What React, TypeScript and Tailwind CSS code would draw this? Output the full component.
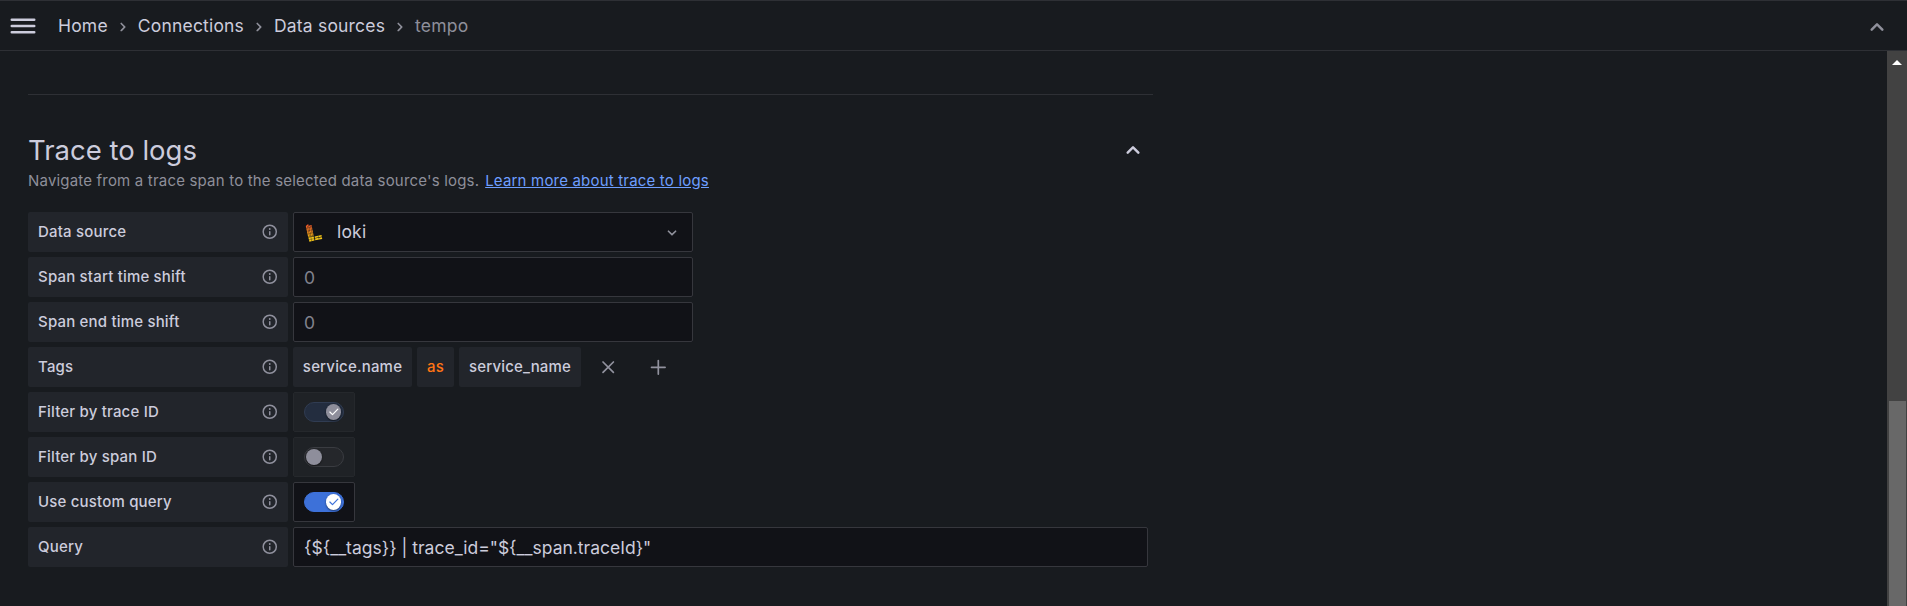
import type { ReactNode } from 'react';

const paths = {
  bars: 'M3,8H21a1,1,0,0,0,0-2H3A1,1,0,0,0,3,8Zm18,8H3a1,1,0,0,0,0,2H21a1,1,0,0,0,0-2Zm0-5H3a1,1,0,0,0,0,2H21a1,1,0,0,0,0-2Z',
  info: 'M12,2A10,10,0,1,0,22,12,10,10,0,0,0,12,2Zm0,18a8,8,0,1,1,8-8A8,8,0,0,1,12,20Zm0-9a1,1,0,0,0-1,1v4a1,1,0,0,0,2,0V12A1,1,0,0,0,12,11Zm0-4a1.25,1.25,0,1,0,1.25,1.25A1.25,1.25,0,0,0,12,7Z',
  right: 'M14.83,11.29,10.59,7.05a1,1,0,0,0-1.42,0,1,1,0,0,0,0,1.41L12.71,12,9.17,15.54a1,1,0,0,0,0,1.41,1,1,0,0,0,.71.29,1,1,0,0,0,.71-.29l4.24-4.24A1,1,0,0,0,14.83,11.29Z',
  down: 'M17,9.17a1,1,0,0,0-1.41,0L12,12.71,8.46,9.17a1,1,0,0,0-1.41,0,1,1,0,0,0,0,1.42l4.24,4.24a1,1,0,0,0,1.42,0L17,10.59A1,1,0,0,0,17,9.17Z',
  up: 'M17,13.41,12.71,9.17a1,1,0,0,0-1.42,0L7.05,13.41a1,1,0,0,0,0,1.42,1,1,0,0,0,1.41,0L12,11.29l3.54,3.54a1,1,0,0,0,.7.29,1,1,0,0,0,.71-.29A1,1,0,0,0,17,13.41Z',
};

function Icon({ name, className }: { name: keyof typeof paths; className: string }) {
  return (
    <svg viewBox="0 0 24 24" fill="currentColor" className={`shrink-0 ${className}`}>
      <path d={paths[name]} />
    </svg>
  );
}

function LokiLogo() {
  return (
    <svg viewBox="0 0 20 20" className="mt-[2px] size-5 shrink-0">
      <defs>
        <linearGradient id="loki" x1="0" y1="0" x2="0" y2="1">
          <stop offset="0" stopColor="#f0502a" />
          <stop offset="0.5" stopColor="#f58220" />
          <stop offset="1" stopColor="#f8b914" />
        </linearGradient>
      </defs>
      <path d="M1.8 3 4.2 1l2.6 12.7-2.6.5zM4.9 2.8l2.6-.9 2.2 11.2-2.6.5z" fill="url(#loki)" />
      <path d="M4.4 14.6l5.3-1 .8 4-5.1 1.2z" fill="#f5c518" />
      <path d="M10.6 13.4l6.9-1.3.3 1.5-6.9 1.3zM11 15.6l6.9-1.3.3 1.6-6.9 1.3z" fill="#f5c518" />
      <path d="M2.2 5.4l6-1.8M2.9 8.3l6-1.8M3.5 11.2l6-1.8M4 13.8l6-1.6M6.9 14l.9 4.6M4.6 16.8l5.8-1.2M14.2 12.4l.9 4.2M3.4 3l2.2 10.6M6.6 3l1.9 10" stroke="#111217" strokeWidth=".55" opacity=".65" />
    </svg>
  );
}

function Row({ label, children }: { label: string; children: ReactNode }) {
  return (
    <div className="flex h-10 gap-[5px]">
      <div className="flex w-[260px] items-center justify-between rounded-[2px] bg-[#22252b] px-[10px] text-[15px] font-medium tracking-[0.1875px]">
        <span>{label}</span>
        <Icon name="info" className="size-[17.5px] text-[#90919e]" />
      </div>
      {children}
    </div>
  );
}

const field = 'flex items-center rounded-[2px] border border-[#36373d] bg-[#111217] px-[10px]';
const chip = 'flex items-center justify-center rounded-[2px] bg-[#22252b] text-[15px] font-medium tracking-[0.1875px]';

function Toggle({ on = false, disabled = false }: { on?: boolean; disabled?: boolean }) {
  const box = disabled ? 'border-[#25282c] bg-[#1f2226]' : 'border-[#36373d] bg-[#111217]';
  const track = !on
    ? 'justify-start border-[#3a3c41] bg-[#25272b] pl-px'
    : disabled
      ? 'justify-end border-[#303c52] bg-[#232d3f] pr-[2px]'
      : 'justify-end border-[#3d71d9] bg-[#3d71d9] pr-[2px]';
  const knob = disabled ? 'bg-[#8e8e9b] text-white' : 'bg-white text-[#3d71d9]';
  return (
    <div className={`flex w-[62px] items-center justify-center rounded-[2px] border ${box}`}>
      <div className={`flex h-5 w-10 items-center rounded-full border ${track}`}>
        <div className={`flex size-[15.5px] items-center justify-center rounded-full shadow-[0_1px_2px_rgba(0,0,0,0.5)] ${knob}`}>
          {on && (
            <svg viewBox="0 0 16 16" className="size-[15.5px]" fill="none" stroke="currentColor" strokeWidth="1.25" strokeLinecap="round" strokeLinejoin="round">
              <path d="M4 8.3l2.7 2.7 5.5-5.7" />
            </svg>
          )}
        </div>
      </div>
    </div>
  );
}

function Separator() {
  return <Icon name="right" className="mt-[2px] size-5 text-[#8f909b]" />;
}

export default function App() {
  return (
    <div className="flex h-[606px] flex-col overflow-hidden bg-[#181b1f] font-['Inter',sans-serif] text-[#ccccdc]">
      <header className="flex h-[51px] shrink-0 items-center border-y border-[#2e3035] pr-[15px] pl-2">
        <Icon name="bars" className="mt-px size-[30px]" />
        <nav className="ml-5 flex flex-1 items-center gap-[5px] text-[17.5px] leading-[27px] tracking-[0.1874px]">
          <span>Home</span>
          <Separator />
          <span>Connections</span>
          <Separator />
          <span>Data sources</span>
          <Separator />
          <span className="text-[#8e8f9a]">tempo</span>
        </nav>
        <Icon name="up" className="mt-[2px] size-[30px] text-[#8f909b]" />
      </header>
      <div className="flex min-h-0 flex-1">
        <main className="flex-1 pt-[43px] pl-7">
          <div className="w-[1125px] border-t border-[#2e3035]" />
          <div className="mt-[38px] flex h-[35px] w-[1125px] items-center justify-between pr-[5px]">
            <h3 className="text-[27.5px] leading-[33px]">Trace to logs</h3>
            <Icon name="up" className="mb-[2px] size-[30px]" />
          </div>
          <p className="mt-px flex h-[23px] items-center gap-[6px] text-[15px] leading-[23px] tracking-[0.1875px] text-[#8e8f9a]">
            <span>Navigate from a trace span to the selected data source's logs.</span>
            <a className="text-[#6e9fff] underline">Learn more about trace to logs</a>
          </p>
          <div className="mt-5 flex flex-col gap-[5px]">
            <Row label="Data source">
              <div className={`${field} w-[400px] text-[17.5px]`}>
                <LokiLogo />
                <span className="ml-[13px] flex-1 tracking-[0.1874px]">loki</span>
                <Icon name="down" className="mt-px size-5 text-[#8f909b]" />
              </div>
            </Row>
            <Row label="Span start time shift">
              <div className={`${field} w-[400px] pt-[2px] text-[17.5px] text-[#82838e]`}>0</div>
            </Row>
            <Row label="Span end time shift">
              <div className={`${field} w-[400px] pt-[2px] text-[17.5px] text-[#82838e]`}>0</div>
            </Row>
            <Row label="Tags">
              <div className={`${chip} w-[119px]`}>service.name</div>
              <div className={`${chip} w-[37px] text-[#ff7414]`}>as</div>
              <div className={`${chip} w-[122px]`}>service_name</div>
              <div className="ml-[5px] flex items-center gap-[30px] text-[#91929e]">
                <svg viewBox="0 0 20 20" className="ml-[7px] size-5" fill="none" stroke="currentColor" strokeWidth="1.7" strokeLinecap="round">
                  <path d="M5 5l10.4 10.4M15.4 5L5 15.4" />
                </svg>
                <svg viewBox="0 0 20 20" className="size-5" fill="none" stroke="currentColor" strokeWidth="1.7" strokeLinecap="round">
                  <path d="M3.5 10.3h13.6M10.3 3.5v13.6" />
                </svg>
              </div>
            </Row>
            <Row label="Filter by trace ID">
              <Toggle on disabled />
            </Row>
            <Row label="Filter by span ID">
              <Toggle disabled />
            </Row>
            <Row label="Use custom query">
              <Toggle on />
            </Row>
            <Row label="Query">
              <div className={`${field} w-[855px] pt-[2px] text-[17.5px]`}>{'{${__tags}} | trace_id="${__span.traceId}"'}</div>
            </Row>
          </div>
        </main>
        <div className="flex w-5 flex-col items-center bg-[#424242] pt-[9px]">
          <svg viewBox="0 0 10 5" className="h-[5px] w-[10px] shrink-0 fill-white">
            <path d="M5 0l5 5H0z" />
          </svg>
          <div className="mt-[336px] ml-px w-[17px] flex-1 bg-[#686868]" />
        </div>
      </div>
    </div>
  );
}
